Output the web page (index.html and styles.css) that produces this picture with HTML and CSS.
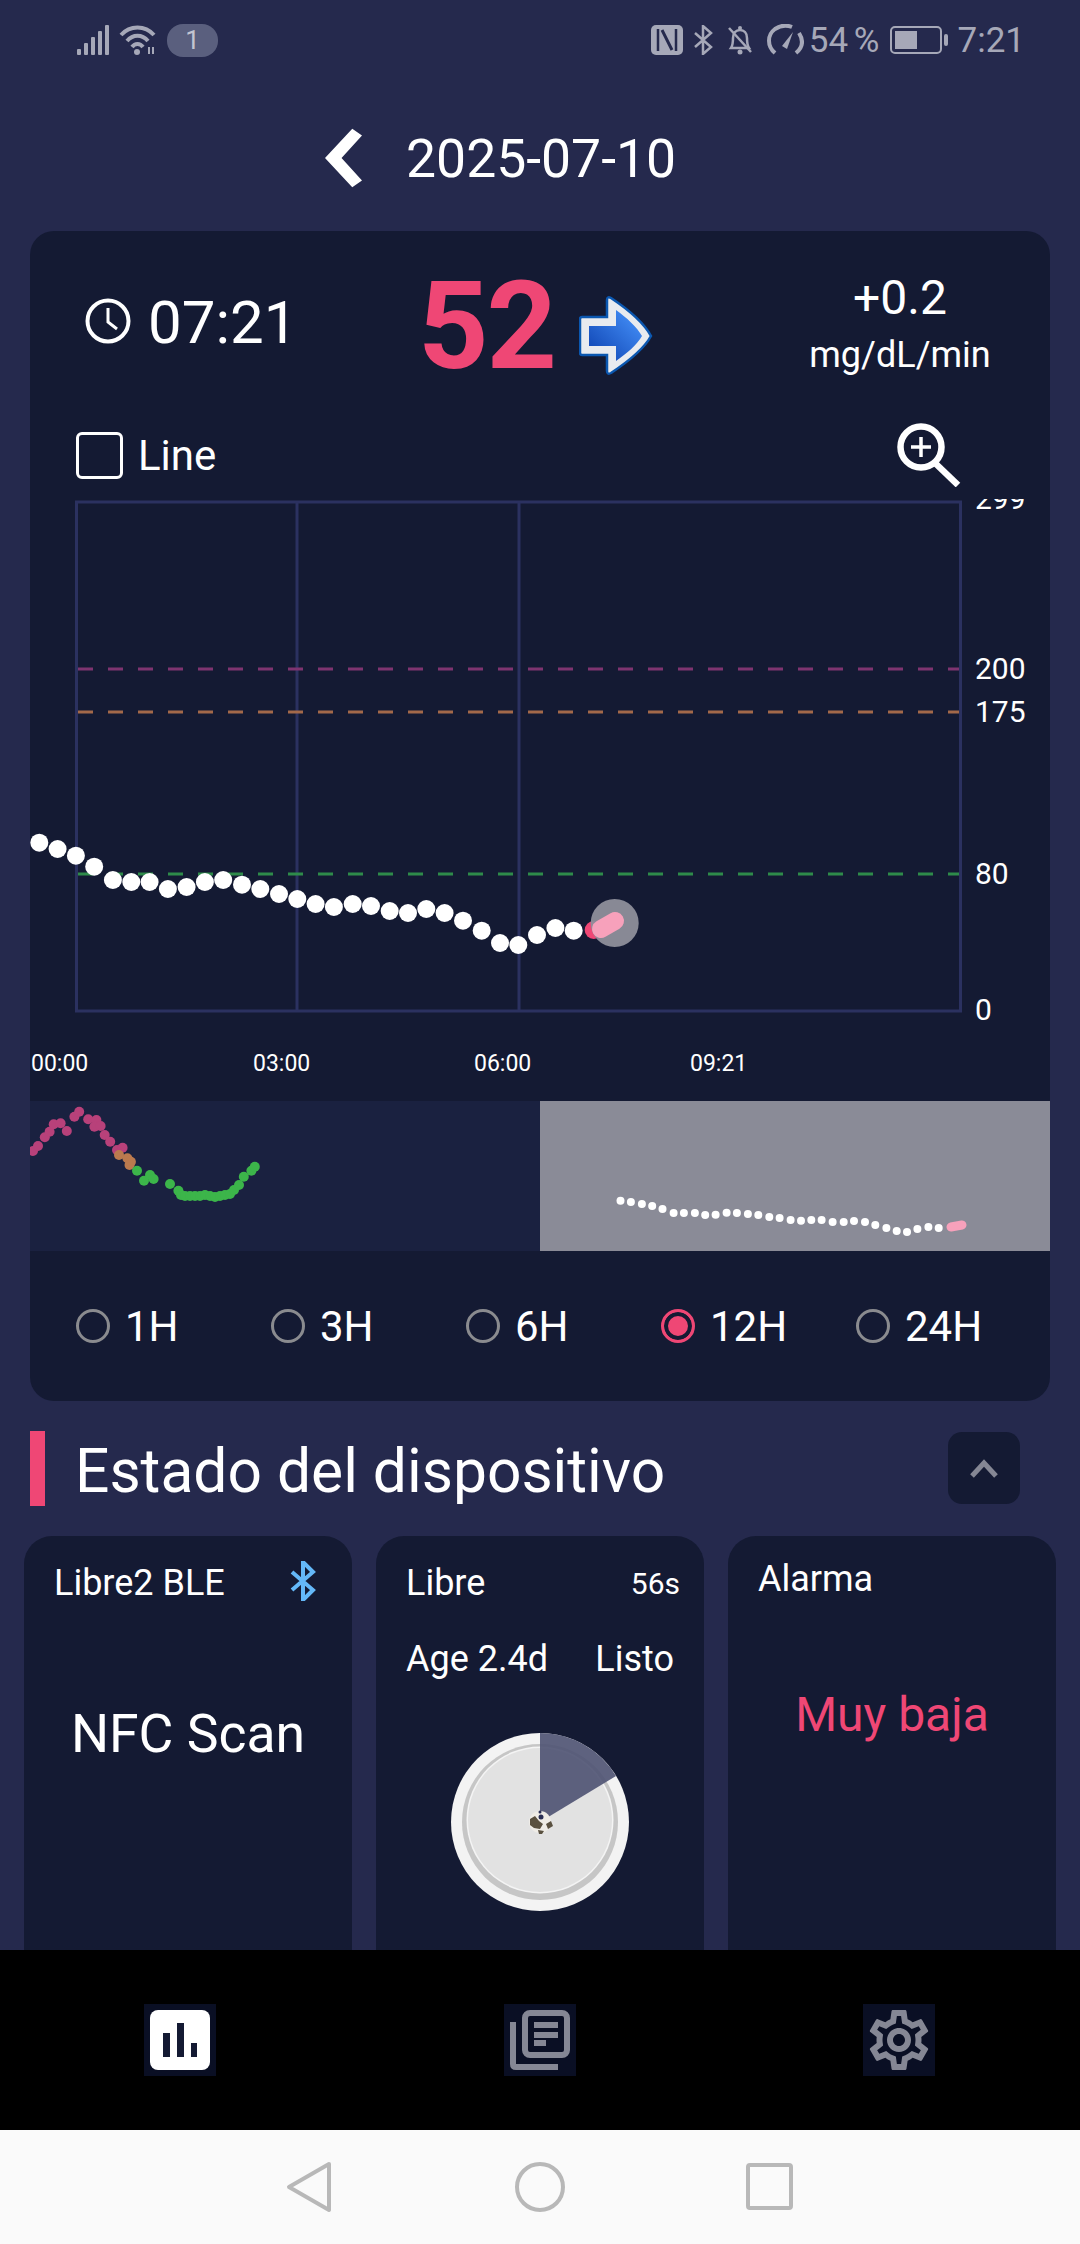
FILE: index.html
```html
<!DOCTYPE html>
<html lang="es">
<head>
  <meta charset="UTF-8" />
  <meta name="viewport" content="width=device-width, initial-scale=1.0"/>
  <title>2025-07-10</title>
  <link rel="stylesheet" href="styles.css">
</head>
<body>
  <div class="statusBar">
    <div class="statusGroup">
      <svg class="icoSignal" viewBox="0 0 32 30"><g fill="#a6a8b8"><rect x="0" y="24" width="4" height="6" rx="1"/><rect x="7" y="18" width="4" height="12" rx="1"/><rect x="14" y="12" width="4" height="18" rx="1"/><rect x="21" y="6" width="4" height="24" rx="1"/><rect x="28" y="0" width="4" height="30" rx="1"/></g></svg>
      <svg class="icoWifi" viewBox="0 0 38 30"><g fill="none" stroke="#a6a8b8" stroke-width="4"><path d="M2 10 C11 0 26 0 35 10"/><path d="M8 16 C14 9 23 9 29 16"/><path d="M13 22 C16 18 21 18 24 22"/></g><circle cx="18" cy="27" r="3" fill="#a6a8b8"/><path d="M30 22v7M34 29v-7" stroke="#a6a8b8" stroke-width="2"/></svg>
      <span class="badge">1</span>
    </div>
    <div class="statusGroup">
      <svg class="icoNfc" viewBox="0 0 32 30"><rect x="0" y="0" width="32" height="30" rx="5" fill="#a6a8b8"/><path d="M7 4v22M25 4v22" stroke="#25294d" stroke-width="2.5"/><path d="M11 5l10 20" stroke="#25294d" stroke-width="3"/></svg>
      <svg class="icoBt" viewBox="0 0 20 30"><path d="M2 8l16 14-8 7V1l8 7L2 22" fill="none" stroke="#a6a8b8" stroke-width="2.5"/></svg>
      <svg class="icoBell" viewBox="0 0 28 30"><g fill="none" stroke="#a6a8b8" stroke-width="2.5"><path d="M5 23c2-3 2-6 2-10 0-5 3-8 7-8s7 3 7 8c0 4 0 7 2 10z"/><path d="M3 3l22 24"/></g><circle cx="14" cy="27" r="2.5" fill="#a6a8b8"/><circle cx="14" cy="3" r="2" fill="#a6a8b8"/></svg>
      <svg class="icoGauge" viewBox="0 0 38 32"><g fill="none" stroke="#a6a8b8" stroke-width="4"><path d="M9 29C1 22 1 11 9 5c6-4 12-4 17-2"/><path d="M33 9c5 8 3 15-3 20"/></g><path d="M27 8l-6 17-5-3z" fill="#a6a8b8"/></svg>
      <span class="statusText percentText">54 %</span>
      <div class="battery"><div class="batteryLevel"></div></div>
      <span class="statusText">7:21</span>
    </div>
  </div>

  <div class="titleRow">
    <svg class="backIcon" viewBox="0 0 38 60"><path d="M28 0l10 7L17 30l21 23-10 7L0 30z" fill="#ffffff"/></svg>
    <h1 class="dateTitle">2025-07-10</h1>
  </div>

  <div class="chartCard">
    <div class="summary">
      <div class="timeBox">
        <svg class="clockIcon" viewBox="0 0 46 46"><circle cx="23" cy="23" r="20.5" fill="none" stroke="#fff" stroke-width="4"/><path d="M23 10v14l9 7" fill="none" stroke="#fff" stroke-width="3"/></svg>
        <span class="timeText">07:21</span>
      </div>
      <div class="valueBox">
        <span class="glucose">52</span>
        <svg class="trendArrow" viewBox="0 0 74 80">
          <defs><linearGradient id="arrowFill" x1="0" y1="1" x2="1" y2="0"><stop offset="0" stop-color="#0b3fae"/><stop offset="1" stop-color="#4a97ff"/></linearGradient></defs>
          <path d="M3 21H28V4Q28 0 32 2C50 14 65 27 72 40C65 53 50 65 32 77Q28 79 28 75V59H3Q1 59 1 57V23Q1 21 3 21Z" fill="#e9ebef" stroke="#0b57b0" stroke-width="2.5"/>
          <path d="M10 30H37V14C48 22 58 31 63 40C58 49 48 57 37 65V50H10Z" fill="url(#arrowFill)"/>
        </svg>
      </div>
      <div class="rateBox">
        <span class="rateValue">+0.2</span>
        <span class="rateUnit">mg/dL/min</span>
      </div>
    </div>

    <div class="tools">
      <label class="lineToggle"><span class="checkBox"></span>Line</label>
      <svg class="zoomIcon" viewBox="0 0 64 64"><circle cx="24" cy="24" r="20.5" fill="none" stroke="#fff" stroke-width="6.5"/><path d="M24 14v20M14 24h20" stroke="#fff" stroke-width="3.5"/><path d="M38 40l23 22" stroke="#fff" stroke-width="6.5"/></svg>
    </div>

    <svg class="chart" viewBox="30 499 1020 602">
      <g class="grid">
        <rect x="76.5" y="502" width="884" height="509"/>
        <path d="M297 502V1010M519 502V1010"/>
      </g>
      <path class="limit limitHigh" d="M78 669H959"/>
      <path class="limit limitMid" d="M78 712H959"/>
      <path class="limit limitLow" d="M78 874H959"/>
      <g class="axisY">
        <text x="975" y="509">299</text>
        <text x="975" y="679">200</text>
        <text x="975" y="722">175</text>
        <text x="975" y="884">80</text>
        <text x="975" y="1020">0</text>
      </g>
      <g class="axisX">
        <text x="31" y="1071">00:00</text>
        <text x="253" y="1071">03:00</text>
        <text x="474" y="1071">06:00</text>
        <text x="690" y="1071">09:21</text>
      </g>
      <g class="dots">
        <circle cx="39.3" cy="842.7" r="9"/><circle cx="57.6" cy="849" r="9"/><circle cx="75.9" cy="855.7" r="9"/><circle cx="94.2" cy="866.7" r="9"/>
        <circle cx="112.9" cy="880" r="9"/><circle cx="131.3" cy="882" r="9"/><circle cx="149.6" cy="882" r="9"/><circle cx="167.9" cy="889" r="9"/>
        <circle cx="186.6" cy="887" r="9"/><circle cx="204.9" cy="882" r="9"/><circle cx="223.2" cy="880" r="9"/><circle cx="242" cy="884.7" r="9"/>
        <circle cx="260.3" cy="889" r="9"/><circle cx="279" cy="894" r="9"/><circle cx="297.3" cy="899" r="9"/><circle cx="315.6" cy="904" r="9"/>
        <circle cx="333.9" cy="907" r="9"/><circle cx="352.7" cy="904" r="9"/><circle cx="371" cy="906" r="9"/><circle cx="389.7" cy="911" r="9"/>
        <circle cx="408" cy="913" r="9"/><circle cx="426.3" cy="909" r="9"/><circle cx="444.6" cy="913" r="9"/><circle cx="463" cy="920.7" r="9"/>
        <circle cx="481.7" cy="930.7" r="9"/><circle cx="500" cy="943" r="9"/><circle cx="518.3" cy="945" r="9"/><circle cx="537" cy="935" r="9"/>
        <circle cx="555.4" cy="928" r="9"/><circle cx="573.7" cy="930.7" r="9"/>
      </g>
      <circle class="lastDot" cx="593.7" cy="930" r="9"/>
      <circle class="halo" cx="614.7" cy="923" r="24"/>
      <path class="lastTail" d="M601 929L615 921"/>
    </svg>

    <div class="overview">
      <svg class="overviewChart" viewBox="30 1101 1020 150">
        <rect class="overviewLeft" x="30" y="1101" width="510" height="150"/>
        <rect class="overviewRight" x="540" y="1101" width="510" height="150"/>
        <g class="miniHigh">
          <circle cx="33" cy="1151" r="5"/><circle cx="38" cy="1146" r="5"/><circle cx="44.8" cy="1137.3" r="5"/><circle cx="49.6" cy="1131.7" r="5"/>
          <circle cx="53.7" cy="1124.3" r="5"/><circle cx="60.6" cy="1123.3" r="5"/><circle cx="66.8" cy="1131" r="5"/><circle cx="74.4" cy="1116.7" r="5"/>
          <circle cx="79.2" cy="1111.7" r="5"/><circle cx="88.2" cy="1119.3" r="5"/><circle cx="96.4" cy="1120" r="5"/><circle cx="94.4" cy="1126.7" r="5"/>
          <circle cx="100.6" cy="1126" r="5"/><circle cx="104.7" cy="1135" r="5"/><circle cx="110.2" cy="1141.7" r="5"/><circle cx="117" cy="1150" r="5"/>
          <circle cx="122.6" cy="1147.7" r="5"/>
        </g>
        <g class="miniMid">
          <circle cx="119" cy="1155" r="5"/><circle cx="127.4" cy="1158.3" r="5"/><circle cx="130.9" cy="1161.7" r="5"/><circle cx="129.5" cy="1165" r="5"/>
        </g>
        <g class="miniLow">
          <circle cx="137" cy="1170.7" r="5"/><circle cx="144" cy="1180.7" r="5"/><circle cx="150" cy="1175" r="5"/><circle cx="153.6" cy="1179" r="5"/>
          <circle cx="170" cy="1184" r="5"/><circle cx="178.4" cy="1190.7" r="5"/><circle cx="181" cy="1195" r="5"/><circle cx="185" cy="1196" r="5"/>
          <circle cx="190" cy="1196" r="5"/><circle cx="195" cy="1196" r="5"/><circle cx="200" cy="1196" r="5"/><circle cx="205" cy="1195" r="5"/>
          <circle cx="210" cy="1196" r="5"/><circle cx="215" cy="1197" r="5"/><circle cx="220" cy="1196" r="5"/><circle cx="225" cy="1195" r="5"/>
          <circle cx="230" cy="1194" r="5"/><circle cx="234" cy="1190" r="5"/><circle cx="239" cy="1185" r="5"/><circle cx="243.8" cy="1176.7" r="5"/>
          <circle cx="251.4" cy="1170.7" r="5"/><circle cx="254.8" cy="1166.7" r="5"/>
        </g>
        <g class="miniDots">
          <circle cx="620.5" cy="1200.7" r="4"/><circle cx="630.9" cy="1202" r="4"/><circle cx="641.9" cy="1204" r="4"/><circle cx="652.2" cy="1206" r="4"/>
          <circle cx="662.5" cy="1209" r="4"/><circle cx="673.6" cy="1213" r="4"/><circle cx="683.9" cy="1213" r="4"/><circle cx="694.9" cy="1213" r="4"/>
          <circle cx="705.2" cy="1215" r="4"/><circle cx="715.6" cy="1214.7" r="4"/><circle cx="726.6" cy="1212.7" r="4"/><circle cx="736.9" cy="1213" r="4"/>
          <circle cx="747.9" cy="1214" r="4"/><circle cx="758.3" cy="1215" r="4"/><circle cx="769.3" cy="1217" r="4"/><circle cx="779.6" cy="1218" r="4"/>
          <circle cx="790.6" cy="1220" r="4"/><circle cx="801" cy="1220.7" r="4"/><circle cx="811.3" cy="1220" r="4"/><circle cx="821.6" cy="1220" r="4"/>
          <circle cx="832.6" cy="1222" r="4"/><circle cx="843.7" cy="1222" r="4"/><circle cx="854" cy="1221" r="4"/><circle cx="865" cy="1222" r="4"/>
          <circle cx="875.3" cy="1225" r="4"/><circle cx="886.4" cy="1228" r="4"/><circle cx="896.7" cy="1231" r="4"/><circle cx="907" cy="1232" r="4"/>
          <circle cx="917.4" cy="1229" r="4"/><circle cx="928.4" cy="1227" r="4"/><circle cx="938.7" cy="1228" r="4"/>
        </g>
        <path class="miniTail" d="M951 1227L962 1225"/>
      </svg>
    </div>

    <div class="ranges">
      <label class="range"><span class="radio"></span>1H</label>
      <label class="range"><span class="radio"></span>3H</label>
      <label class="range"><span class="radio"></span>6H</label>
      <label class="range"><span class="radio radioOn"></span>12H</label>
      <label class="range"><span class="radio"></span>24H</label>
    </div>
  </div>

  <div class="sectionHead">
    <span class="sectionMark"></span>
    <h2 class="sectionTitle">Estado del dispositivo</h2>
    <button class="collapseBtn"><svg viewBox="0 0 30 20"><path d="M3 18L15 5l12 13" fill="none" stroke="#858794" stroke-width="5"/></svg></button>
  </div>

  <div class="devices">
    <div class="device">
      <div class="deviceRow">
        <span>Libre2 BLE</span>
        <svg class="btIcon" viewBox="0 0 26 40"><path d="M2 11l21 18-10 10V1l10 10L2 29" fill="none" stroke="#64b8f8" stroke-width="4"/></svg>
      </div>
      <p class="nfcText">NFC Scan</p>
    </div>
    <div class="device">
      <div class="deviceRow">
        <span>Libre</span>
        <span class="smallText">56s</span>
      </div>
      <div class="deviceRow ageRow">
        <span>Age 2.4d</span>
        <span>Listo</span>
      </div>
      <svg class="dial" viewBox="0 0 180 180">
        <circle cx="90" cy="90" r="89" fill="#f3f3f3"/>
        <circle cx="90" cy="90" r="78" fill="#c6c6c6"/>
        <circle cx="90" cy="88" r="73.5" fill="#f4f4f4"/>
        <circle cx="90" cy="88" r="72" fill="#e2e2e2"/>
        <path d="M90 90V1A89 89 0 0 1 166 44Z" fill="#4e5272" fill-opacity="0.9"/>
        <circle cx="90" cy="90" r="11" fill="#efece6"/>
        <path d="M80 87l5-3 4 5 4 3-3 5-6-1-4-3zM96 92l5-3 2 5-5 3zM88 98l6 1-2 3h-3z" fill="#5a5140"/>
        <circle cx="91" cy="85" r="2.5" fill="#2b2f55"/>
        <circle cx="90" cy="80" r="1.5" fill="#2b2f55"/>
      </svg>
    </div>
    <div class="device">
      <div class="deviceRow alarmRow">
        <span>Alarma</span>
      </div>
      <p class="alarmText">Muy baja</p>
    </div>
  </div>

  <div class="bottomNav">
    <div class="navItem">
      <svg viewBox="0 0 72 72"><rect width="72" height="72" fill="#0a0f24"/><rect x="6" y="6" width="60" height="60" rx="8" fill="#ffffff"/><path d="M19 29h7v24h-7zM33 19h7v34h-7zM47 39h6v14h-6z" fill="#141a33"/></svg>
    </div>
    <div class="navItem">
      <svg viewBox="0 0 72 72"><rect width="72" height="72" fill="#0a0f24"/><path d="M6 18h6v42h42v6H12q-6 0-6-6z" fill="#858794"/><rect x="21" y="9" width="42" height="42" rx="5" fill="none" stroke="#858794" stroke-width="6"/><path d="M30 18h24v6H30zM30 28h24v6H30zM30 36h12v6H30z" fill="#858794"/></svg>
    </div>
    <div class="navItem navSettings">
      <svg viewBox="0 0 72 72"><rect width="72" height="72" fill="#0a0f24"/><path transform="scale(3)" fill="#858794" d="M19.43 12.98c.04-.32.07-.64.07-.98 0-.34-.03-.66-.07-.98l2.11-1.65c.19-.15.24-.42.12-.64l-2-3.46c-.09-.16-.26-.25-.44-.25-.06 0-.12.01-.17.03l-2.49 1c-.52-.4-1.08-.73-1.69-.98l-.38-2.65C14.46 2.18 14.25 2 14 2h-4c-.25 0-.46.18-.49.42l-.38 2.65c-.61.25-1.17.59-1.69.98l-2.49-1c-.06-.02-.12-.03-.18-.03-.17 0-.34.09-.43.25l-2 3.46c-.13.22-.07.49.12.64l2.11 1.65c-.04.32-.07.65-.07.98 0 .33.03.66.07.98l-2.11 1.65c-.19.15-.24.42-.12.64l2 3.46c.09.16.26.25.44.25.06 0 .12-.01.17-.03l2.49-1c.52.4 1.08.73 1.69.98l.38 2.65c.03.24.24.42.49.42h4c.25 0 .46-.18.49-.42l.38-2.65c.61-.25 1.17-.59 1.69-.98l2.49 1c.06.02.12.03.18.03.17 0 .34-.09.43-.25l2-3.46c.12-.22.07-.49-.12-.64l-2.11-1.65zm-1.98-1.71c.04.31.05.52.05.73 0 .21-.02.43-.05.73l-.14 1.13.89.7 1.08.84-.7 1.21-1.27-.51-1.04-.42-.9.68c-.43.32-.84.56-1.25.73l-1.06.43-.16 1.13-.2 1.35h-1.4l-.19-1.35-.16-1.13-1.06-.43c-.43-.18-.83-.41-1.23-.71l-.91-.7-1.06.43-1.27.51-.7-1.21 1.08-.84.89-.7-.14-1.13c-.03-.31-.05-.54-.05-.74s.02-.43.05-.73l.14-1.13-.89-.7-1.08-.84.7-1.21 1.27.51 1.04.42.9-.68c.43-.32.84-.56 1.25-.73l1.06-.43.16-1.13.2-1.35h1.39l.19 1.35.16 1.13 1.06.43c.43.18.83.41 1.23.71l.91.7 1.06-.43 1.27-.51.7 1.21-1.07.85-.89.7.14 1.13zM12 8c-2.21 0-4 1.79-4 4s1.79 4 4 4 4-1.79 4-4-1.79-4-4-4zm0 6c-1.1 0-2-.9-2-2s.9-2 2-2 2 .9 2 2-.9 2-2 2z"/></svg>
    </div>
  </div>

  <div class="systemNav">
    <svg viewBox="0 0 60 60"><path d="M50 7L10 30l40 23z" fill="none" stroke="#b8b8b8" stroke-width="4" stroke-linejoin="round"/></svg>
    <svg viewBox="0 0 60 60"><circle cx="30" cy="30" r="23" fill="none" stroke="#b8b8b8" stroke-width="4"/></svg>
    <svg viewBox="0 0 60 60"><rect x="7" y="8" width="43" height="43" rx="2" fill="none" stroke="#b8b8b8" stroke-width="4"/></svg>
  </div>
</body>
</html>
```

FILE: styles.css
```css
* {
  margin: 0;
  padding: 0;
  box-sizing: border-box;
}

body {
  display: flex;
  flex-direction: column;
  width: 1080px;
  height: 2244px;
  overflow: hidden;
  font-family: 'Roboto', 'Liberation Sans', sans-serif;
  background-color: #25294d;
  color: #ffffff;
}

.statusBar {
  display: flex;
  justify-content: space-between;
  align-items: center;
  height: 85px;
  padding: 0 55px 5px 77px;
  flex-shrink: 0;
}

.statusGroup {
  display: flex;
  align-items: center;
  gap: 10px;
}

.statusText {
  font-size: 35px;
  color: #a6a8b8;
}

.percentText {
  margin-left: -5px;
  word-spacing: -3px;
}

.icoSignal { width: 32px; height: 30px; }
.icoWifi { width: 38px; height: 30px; }
.icoNfc { width: 32px; height: 30px; }
.icoBt { width: 20px; height: 30px; }
.icoBell { width: 28px; height: 30px; margin-left: 3px; }
.icoGauge { width: 38px; height: 32px; margin-left: 2px; }

.badge {
  display: flex;
  justify-content: center;
  align-items: center;
  width: 51px;
  height: 33px;
  border-radius: 16px;
  background-color: #5a5f7e;
  color: #c3c5d1;
  font-size: 26px;
}

.battery {
  position: relative;
  display: flex;
  width: 52px;
  height: 28px;
  padding: 3px;
  border: 2px solid #a6a8b8;
  border-radius: 5px;
  margin-right: 6px;
}

.battery::after {
  content: "";
  position: absolute;
  right: -8px;
  top: 6px;
  width: 4px;
  height: 12px;
  background-color: #a6a8b8;
  border-radius: 2px;
}

.batteryLevel {
  width: 54%;
  background-color: #a6a8b8;
}

.titleRow {
  display: flex;
  align-items: center;
  height: 146px;
  padding-left: 325px;
  gap: 44px;
  flex-shrink: 0;
}

.backIcon {
  width: 37px;
  height: 60px;
}

.dateTitle {
  font-size: 53.5px;
  font-weight: 400;
}

.chartCard {
  display: flex;
  flex-direction: column;
  height: 1170px;
  margin: 0 30px;
  border-radius: 24px;
  background-color: #141a33;
  overflow: hidden;
  flex-shrink: 0;
}

.summary {
  display: grid;
  grid-template-columns: 333px 382px 200px;
  align-items: center;
  height: 180px;
  padding-left: 55px;
}

.timeBox {
  display: flex;
  align-items: center;
  gap: 17px;
}

.clockIcon {
  width: 46px;
  height: 46px;
}

.timeText {
  padding-top: 2px;
  font-size: 60px;
}

.valueBox {
  display: flex;
  align-items: center;
  gap: 24px;
  padding-top: 10px;
}

.glucose {
  font-size: 123px;
  font-weight: 700;
  line-height: 1;
  letter-spacing: -2px;
  color: #ef4775;
}

.trendArrow {
  width: 74px;
  height: 80px;
  margin-top: 20px;
}

.rateBox {
  display: flex;
  flex-direction: column;
  align-items: center;
  gap: 8px;
  padding-top: 3px;
}

.rateValue {
  font-size: 48px;
}

.rateUnit {
  font-size: 36px;
}

.tools {
  display: flex;
  justify-content: space-between;
  align-items: center;
  height: 88px;
  padding: 0 89px 0 46px;
}

.lineToggle {
  display: flex;
  align-items: center;
  gap: 15px;
  font-size: 42px;
}

.checkBox {
  width: 47px;
  height: 47px;
  border: 3px solid #ffffff;
  border-radius: 6px;
}

.zoomIcon {
  width: 64px;
  height: 64px;
}

.chart {
  display: block;
  width: 1020px;
  height: 602px;
  flex-shrink: 0;
}

.grid {
  fill: none;
  stroke: #2b3160;
  stroke-width: 3;
}

.limit {
  fill: none;
  stroke-width: 3;
  stroke-dasharray: 15 15;
}

.limitHigh { stroke: #7e3470; }
.limitMid { stroke: #a3694a; }
.limitLow { stroke: #2e8b4a; }

.axisY {
  fill: #ffffff;
  font-size: 30px;
}

.axisX {
  fill: #ffffff;
  font-size: 23px;
}

.dots { fill: #ffffff; }
.lastDot { fill: #ef4775; }
.halo { fill: #8e8f9b; fill-opacity: 0.95; }

.lastTail {
  fill: none;
  stroke: #f7a1bb;
  stroke-width: 18;
  stroke-linecap: round;
}

.overview {
  height: 150px;
  flex-shrink: 0;
}

.overviewChart {
  display: block;
  width: 1020px;
  height: 150px;
}

.overviewLeft { fill: #1a2140; }
.overviewRight { fill: #8a8b97; }
.miniHigh { fill: #b8417a; }
.miniMid { fill: #bb7a4e; }
.miniLow { fill: #3cb54a; }
.miniDots { fill: #ffffff; }

.miniTail {
  fill: none;
  stroke: #f7a1bb;
  stroke-width: 9;
  stroke-linecap: round;
}

.ranges {
  display: grid;
  grid-template-columns: repeat(5, 195px);
  align-items: center;
  height: 150px;
  padding-left: 46px;
}

.range {
  display: flex;
  align-items: center;
  gap: 15px;
  font-size: 42px;
}

.radio {
  width: 34px;
  height: 34px;
  border: 3px solid #8a8b8f;
  border-radius: 50%;
}

.radioOn {
  border-color: #ef4775;
  background-color: #ef4775;
  box-shadow: inset 0 0 0 4px #141a33;
}

.sectionHead {
  display: flex;
  align-items: center;
  height: 75px;
  margin: 30px 60px 30px 30px;
  flex-shrink: 0;
}

.sectionMark {
  width: 15px;
  height: 75px;
  background-color: #ef4775;
}

.sectionTitle {
  flex-grow: 1;
  margin-left: 30px;
  padding-top: 6px;
  font-size: 60.5px;
  font-weight: 400;
}

.collapseBtn {
  display: flex;
  justify-content: center;
  align-items: center;
  width: 72px;
  height: 72px;
  margin-top: -2px;
  border: none;
  border-radius: 14px;
  background-color: #141a33;
}

.collapseBtn svg {
  width: 30px;
  height: 20px;
}

.devices {
  display: flex;
  flex-grow: 1;
  min-height: 0;
  gap: 24px;
  padding: 0 24px;
  overflow: hidden;
}

.device {
  display: flex;
  flex-direction: column;
  width: 328px;
  height: 460px;
  padding: 2px 30px 0;
  border-radius: 28px;
  background-color: #141a33;
  font-size: 36px;
  flex-shrink: 0;
}

.deviceRow {
  display: flex;
  justify-content: space-between;
  align-items: center;
  height: 90px;
}

.btIcon {
  width: 26px;
  height: 40px;
  margin: -4px 6px 0 0;
}

.smallText {
  font-size: 30px;
  margin-right: -6px;
}

.ageRow {
  height: 62px;
}

.nfcText {
  margin-top: 74px;
  text-align: center;
  font-size: 53.5px;
}

.alarmRow {
  height: 82px;
}

.alarmText {
  margin-top: 66px;
  text-align: center;
  font-size: 48px;
  color: #ef4775;
}

.dial {
  width: 180px;
  height: 180px;
  margin: 42px 0 0 44px;
  flex-shrink: 0;
}

.bottomNav {
  display: grid;
  grid-template-columns: repeat(3, 360px);
  align-items: center;
  justify-items: center;
  height: 180px;
  background-color: #000000;
  flex-shrink: 0;
}

.navItem svg {
  display: block;
  width: 72px;
  height: 72px;
}

.navSettings {
  margin-right: 2px;
}

.systemNav {
  display: flex;
  justify-content: center;
  align-items: center;
  gap: 171px;
  height: 114px;
  background-color: #fafafa;
  flex-shrink: 0;
}

.systemNav svg {
  width: 60px;
  height: 60px;
}
```
